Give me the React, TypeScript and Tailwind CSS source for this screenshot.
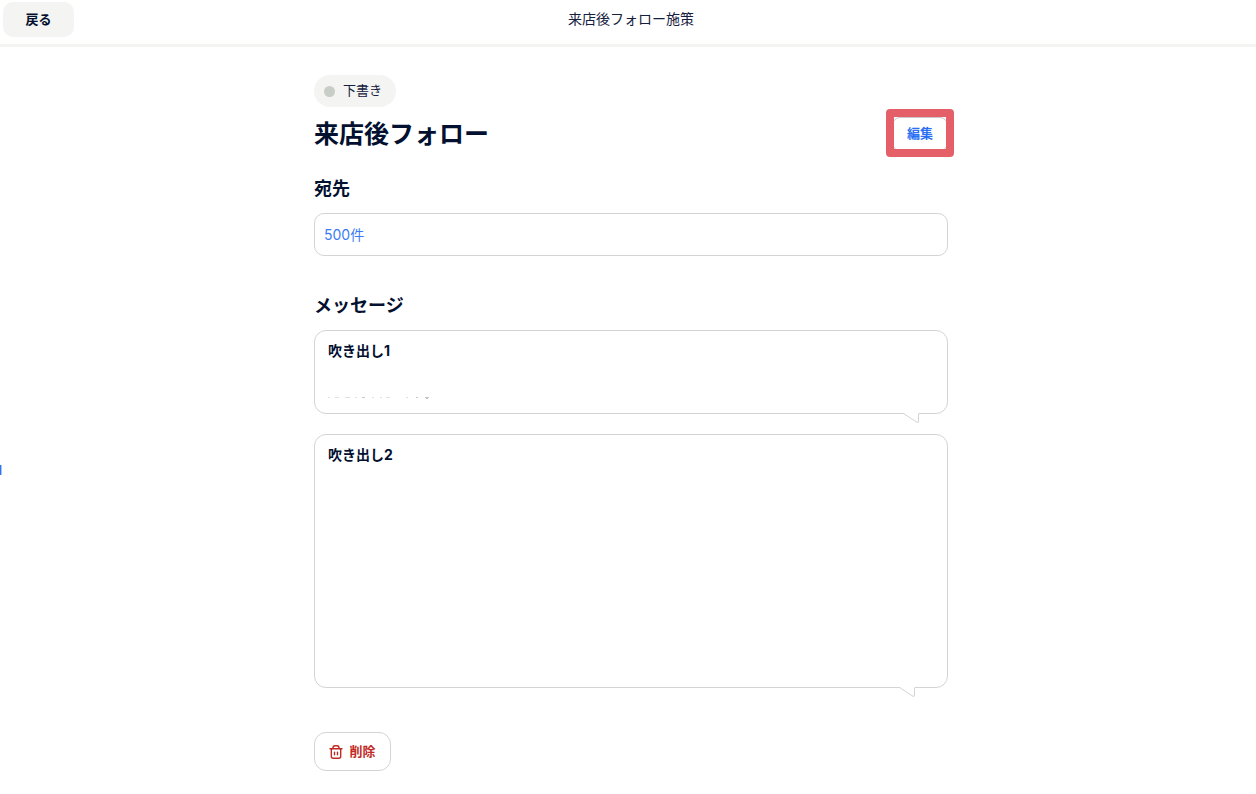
import type { ReactNode } from 'react';

function TrashIcon() {
  return (
    <svg
      aria-hidden="true"
      viewBox="0 0 14 14"
      className="size-3.5"
      fill="none"
      stroke="currentColor"
      strokeWidth="1.4"
      strokeLinecap="round"
      strokeLinejoin="round"
    >
      <path d="M1 3.700h12" />
      <path d="M3.900 3.500C3.900 1.700 4.700 0.800 6 0.800h2c1.300 0 2.100.9 2.100 2.700" />
      <path d="M2.300 4v7.300c0 1.200.7 1.900 1.900 1.900h5.600c1.200 0 1.900-.7 1.900-1.900V4" />
      <path d="M5.500 7.200v2.600M8.500 7.200v2.600" />
    </svg>
  );
}

function Bubble({ title, sizing, tail, children }: { title: string; sizing: string; tail: string; children?: ReactNode }) {
  return (
    <article className={`relative rounded-xl border border-[#d4d4d4] bg-white px-[13px] pt-[11px] ${sizing}`}>
      <h3 className="text-[14px] leading-[18px] font-bold">{title}</h3>
      {children}
      <svg aria-hidden="true" viewBox="0 0 18 11" className={`absolute top-full h-[11px] w-[18px] ${tail}`}>
        <path d="M1 0h15v2H3z" fill="#fff" />
        <path d="M0.500 0.500L14 9.300Q15.500 10 15.500 8V0.500" fill="#fff" stroke="#d4d4d4" />
        <path d="M2.500 0.500H15" stroke="#fff" strokeWidth="1.500" />
      </svg>
    </article>
  );
}

export default function App() {
  return (
    <div className="relative min-h-screen bg-white font-[Inter,'Noto_Sans_CJK_JP',sans-serif] text-[#03102f]">
      <header className="grid h-[47px] grid-cols-[1fr_auto_1fr] items-start border-b-3 border-[#f4f4f2] pt-0.5 pl-[3px]">
        <button type="button" className="h-[35px] w-[71px] justify-self-start rounded-[10px] bg-[#f4f4f2] text-[13px] font-bold">
          戻る
        </button>
        <p className="pl-[3px] text-[14px] leading-[33px] text-[#14203d]">来店後フォロー施策</p>
      </header>

      <span aria-hidden="true" className="absolute top-[465px] left-0 h-[10px] w-0.5 border-r border-[#a9c6fb] bg-[#2f74f5]" />

      <main className="pl-1.5">
        <div className="mx-auto max-w-[634px] pt-7">
          <span className="inline-flex h-8 items-center gap-2 rounded-full bg-[#f4f4f2] pr-3.5 pl-2.5 text-[13px] text-[#14203d]">
            <span className="size-[11px] rounded-full bg-[#c8cdc8]" />
            下書き
          </span>
          <div className="flex h-[54px] items-center justify-between">
            <h1 className="text-[25px] leading-8 font-bold">来店後フォロー</h1>
            <div className="relative">
              <button type="button" className="h-[34px] w-14 rounded-lg border border-[#c8c8c8] bg-white text-[13px] font-bold text-[#2a6ff3]">
                編集
              </button>
              <span aria-hidden="true" className="pointer-events-none absolute -inset-x-1.5 -top-2 -bottom-1.5 rounded-[4px] border-8 border-[#e55f69]" />
            </div>
          </div>

          <section className="pt-4">
            <h2 className="text-[18px] leading-6 font-bold">宛先</h2>
            <div className="mt-3 flex h-[43px] items-center rounded-[10px] border border-[#d4d4d4] px-[9px]">
              <a href="#recipients" className="text-[14px] text-[#3b7cf5]">
                500件
              </a>
            </div>
          </section>

          <section className="pt-[38px]">
            <h2 className="text-[18px] leading-6 font-bold">メッセージ</h2>
            <div className="mt-3 grid gap-5">
              <Bubble title="吹き出し1" sizing="min-h-[84px]" tail="right-[26px]">
                <svg aria-hidden="true" viewBox="0 0 104 4" className="mt-9 h-1 w-[104px]" fill="none" stroke="#dfe1e6">
                  <path d="M0 1.500h2M7 1.500h4M17 1.500h5M27 1.500h2M44 1.500h2M52 1.500h2M58 1.500h4M78 1.500h2M88 1.500h2" />
                  <path d="M34 1.500h3M88 1.500h2M97 1.500h4M98 2.500h2" stroke="#c3c6cd" />
                </svg>
              </Bubble>
              <Bubble title="吹き出し2" sizing="min-h-[254px]" tail="right-[30px]" />
            </div>
          </section>

          <button
            type="button"
            className="mt-11 mb-6 flex h-[39px] w-[77px] items-center justify-center gap-1.5 rounded-xl border border-[#d4d4d4] text-[13px] font-bold text-[#bf2a24]"
          >
            <TrashIcon />
            削除
          </button>
        </div>
      </main>
    </div>
  );
}
